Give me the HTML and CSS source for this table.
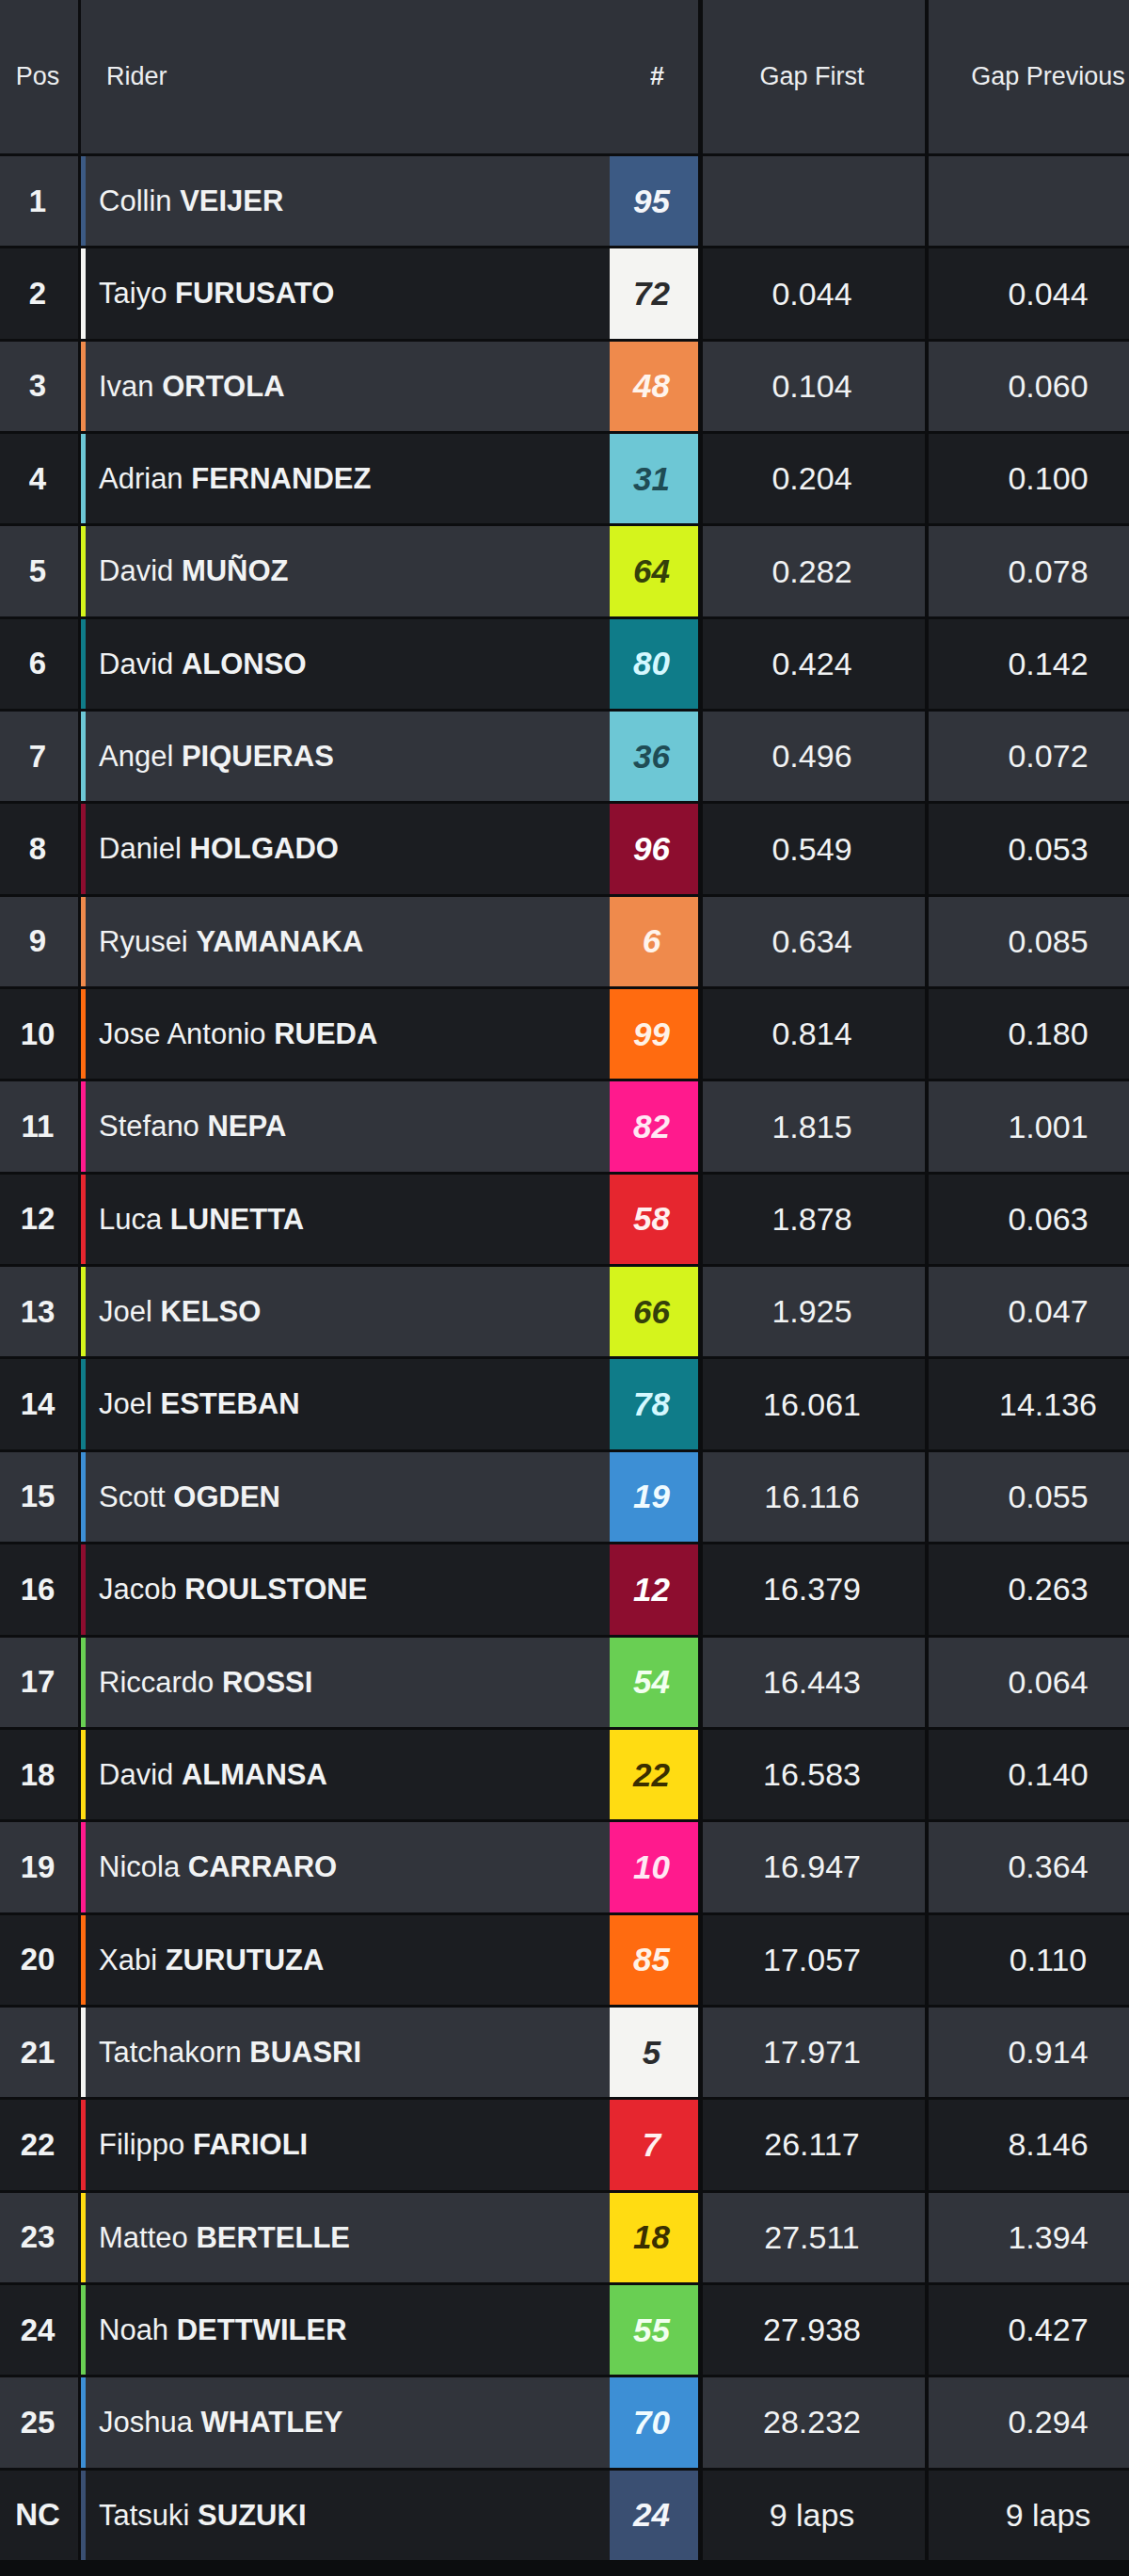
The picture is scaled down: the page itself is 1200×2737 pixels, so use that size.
FILE: index.html
```html
<!DOCTYPE html>
<html lang="en">
<head>
<meta charset="utf-8">
<title>Race Classification</title>
<link rel="stylesheet" href="styles.css">
</head>
<body>
<div class="viewport">
  <div class="results">
    <div class="row head">
      <div class="cell pos">Pos</div>
      <div class="cell rider">Rider</div>
      <div class="cell num">#</div>
      <div class="cell gap1">Gap First</div>
      <div class="cell gap2">Gap Previous</div>
    </div>

    <div class="row odd t-navy"><div class="cell pos">1</div><div class="cell rider">Collin <b>VEIJER</b></div><div class="cell num">95</div><div class="cell gap1"></div><div class="cell gap2"></div></div>
    <div class="row even t-white"><div class="cell pos">2</div><div class="cell rider">Taiyo <b>FURUSATO</b></div><div class="cell num">72</div><div class="cell gap1">0.044</div><div class="cell gap2">0.044</div></div>
    <div class="row odd t-peach"><div class="cell pos">3</div><div class="cell rider">Ivan <b>ORTOLA</b></div><div class="cell num">48</div><div class="cell gap1">0.104</div><div class="cell gap2">0.060</div></div>
    <div class="row even t-cyan"><div class="cell pos">4</div><div class="cell rider">Adrian <b>FERNANDEZ</b></div><div class="cell num">31</div><div class="cell gap1">0.204</div><div class="cell gap2">0.100</div></div>
    <div class="row odd t-lime"><div class="cell pos">5</div><div class="cell rider">David <b>MUÑOZ</b></div><div class="cell num">64</div><div class="cell gap1">0.282</div><div class="cell gap2">0.078</div></div>
    <div class="row even t-teal"><div class="cell pos">6</div><div class="cell rider">David <b>ALONSO</b></div><div class="cell num">80</div><div class="cell gap1">0.424</div><div class="cell gap2">0.142</div></div>
    <div class="row odd t-cyan"><div class="cell pos">7</div><div class="cell rider">Angel <b>PIQUERAS</b></div><div class="cell num">36</div><div class="cell gap1">0.496</div><div class="cell gap2">0.072</div></div>
    <div class="row even t-maroon"><div class="cell pos">8</div><div class="cell rider">Daniel <b>HOLGADO</b></div><div class="cell num">96</div><div class="cell gap1">0.549</div><div class="cell gap2">0.053</div></div>
    <div class="row odd t-peach"><div class="cell pos">9</div><div class="cell rider">Ryusei <b>YAMANAKA</b></div><div class="cell num">6</div><div class="cell gap1">0.634</div><div class="cell gap2">0.085</div></div>
    <div class="row even t-orange"><div class="cell pos">10</div><div class="cell rider">Jose Antonio <b>RUEDA</b></div><div class="cell num">99</div><div class="cell gap1">0.814</div><div class="cell gap2">0.180</div></div>
    <div class="row odd t-pink"><div class="cell pos">11</div><div class="cell rider">Stefano <b>NEPA</b></div><div class="cell num">82</div><div class="cell gap1">1.815</div><div class="cell gap2">1.001</div></div>
    <div class="row even t-red"><div class="cell pos">12</div><div class="cell rider">Luca <b>LUNETTA</b></div><div class="cell num">58</div><div class="cell gap1">1.878</div><div class="cell gap2">0.063</div></div>
    <div class="row odd t-lime"><div class="cell pos">13</div><div class="cell rider">Joel <b>KELSO</b></div><div class="cell num">66</div><div class="cell gap1">1.925</div><div class="cell gap2">0.047</div></div>
    <div class="row even t-teal"><div class="cell pos">14</div><div class="cell rider">Joel <b>ESTEBAN</b></div><div class="cell num">78</div><div class="cell gap1">16.061</div><div class="cell gap2">14.136</div></div>
    <div class="row odd t-blue"><div class="cell pos">15</div><div class="cell rider">Scott <b>OGDEN</b></div><div class="cell num">19</div><div class="cell gap1">16.116</div><div class="cell gap2">0.055</div></div>
    <div class="row even t-maroon"><div class="cell pos">16</div><div class="cell rider">Jacob <b>ROULSTONE</b></div><div class="cell num">12</div><div class="cell gap1">16.379</div><div class="cell gap2">0.263</div></div>
    <div class="row odd t-green"><div class="cell pos">17</div><div class="cell rider">Riccardo <b>ROSSI</b></div><div class="cell num">54</div><div class="cell gap1">16.443</div><div class="cell gap2">0.064</div></div>
    <div class="row even t-yellow"><div class="cell pos">18</div><div class="cell rider">David <b>ALMANSA</b></div><div class="cell num">22</div><div class="cell gap1">16.583</div><div class="cell gap2">0.140</div></div>
    <div class="row odd t-pink"><div class="cell pos">19</div><div class="cell rider">Nicola <b>CARRARO</b></div><div class="cell num">10</div><div class="cell gap1">16.947</div><div class="cell gap2">0.364</div></div>
    <div class="row even t-orange"><div class="cell pos">20</div><div class="cell rider">Xabi <b>ZURUTUZA</b></div><div class="cell num">85</div><div class="cell gap1">17.057</div><div class="cell gap2">0.110</div></div>
    <div class="row odd t-white"><div class="cell pos">21</div><div class="cell rider">Tatchakorn <b>BUASRI</b></div><div class="cell num">5</div><div class="cell gap1">17.971</div><div class="cell gap2">0.914</div></div>
    <div class="row even t-red"><div class="cell pos">22</div><div class="cell rider">Filippo <b>FARIOLI</b></div><div class="cell num">7</div><div class="cell gap1">26.117</div><div class="cell gap2">8.146</div></div>
    <div class="row odd t-yellow"><div class="cell pos">23</div><div class="cell rider">Matteo <b>BERTELLE</b></div><div class="cell num">18</div><div class="cell gap1">27.511</div><div class="cell gap2">1.394</div></div>
    <div class="row even t-green"><div class="cell pos">24</div><div class="cell rider">Noah <b>DETTWILER</b></div><div class="cell num">55</div><div class="cell gap1">27.938</div><div class="cell gap2">0.427</div></div>
    <div class="row odd t-blue"><div class="cell pos">25</div><div class="cell rider">Joshua <b>WHATLEY</b></div><div class="cell num">70</div><div class="cell gap1">28.232</div><div class="cell gap2">0.294</div></div>
    <div class="row even t-slate"><div class="cell pos">NC</div><div class="cell rider">Tatsuki <b>SUZUKI</b></div><div class="cell num">24</div><div class="cell gap1">9 laps</div><div class="cell gap2">9 laps</div></div>
  </div>
</div>
</body>
</html>
```

FILE: styles.css
```css
html, body {
  margin: 0;
  padding: 0;
  background: #0c0d0f;
  overflow: hidden;
}

.viewport {
  width: 1200px;
  height: 2737px;
  overflow: hidden;
  background: #0c0d0f;
}

.results {
  width: 1241px;
  display: flex;
  flex-direction: column;
  gap: 3px;
  font-family: "Liberation Sans", Arial, sans-serif;
  color: #f1f3f4;
}

.row {
  display: flex;
  height: 95.35px;
  --team: #3b5580;
  --team-ink: #ffffff;
}

.row.head {
  height: 163px;
  background: #2f3239;
  font-size: 27px;
  color: #eceef0;
}

.row.odd { background: #31343b; }
.row.even { background: #1b1d21; }

.cell {
  display: flex;
  align-items: center;
  box-sizing: border-box;
  white-space: nowrap;
}

.pos {
  width: 86px;
  justify-content: center;
  padding-right: 3px;
  border-right: 3px solid #0c0d0f;
  font-weight: 700;
  font-size: 33px;
}

.head .pos {
  font-weight: 400;
  font-size: 27px;
}

.rider {
  display: block;
  width: 562px;
  padding-left: 14px;
  font-size: 31px;
  line-height: 95.35px;
  border-left: 5px solid var(--team);
}

.rider b { font-weight: 700; }

.head .rider {
  border-left: 0;
  padding-left: 27px;
  font-size: 27px;
  line-height: 163px;
}

.num {
  width: 99px;
  justify-content: center;
  padding-right: 5px;
  border-right: 5px solid #0c0d0f;
  background: var(--team);
  color: var(--team-ink);
  font-size: 35px;
  font-weight: 700;
  font-style: italic;
}

.head .num {
  background: transparent;
  color: #eceef0;
  font-style: normal;
  font-size: 27px;
  padding-left: 12px;
}

.gap1 {
  width: 240px;
  justify-content: center;
  padding-right: 4px;
  border-right: 4px solid #0c0d0f;
  font-size: 34px;
}

.gap2 {
  width: 254px;
  justify-content: center;
  font-size: 34px;
}

.head .gap1, .head .gap2 { font-size: 27px; }

.t-navy   { --team: #3c5a84; --team-ink: #f4f6fa; }
.t-slate  { --team: #3a4f72; --team-ink: #f4f6fa; }
.t-white  { --team: #f4f4f2; --team-ink: #2a2b2d; }
.t-peach  { --team: #ef8a4c; --team-ink: #fff4ec; }
.t-cyan   { --team: #6dc7d5; --team-ink: #1f4c55; }
.t-lime   { --team: #d5f41c; --team-ink: #34400a; }
.t-teal   { --team: #0f7c89; --team-ink: #d4f8ff; }
.t-maroon { --team: #8d0d2f; --team-ink: #ffffff; }
.t-orange { --team: #ff6b10; --team-ink: #fff2e6; }
.t-pink   { --team: #ff1a8d; --team-ink: #ffe8f4; }
.t-red    { --team: #e6262f; --team-ink: #fff0f0; }
.t-blue   { --team: #3d8fd5; --team-ink: #f0fbff; }
.t-green  { --team: #69cf53; --team-ink: #f2fff0; }
.t-yellow { --team: #ffdc12; --team-ink: #3a2f00; }
```
